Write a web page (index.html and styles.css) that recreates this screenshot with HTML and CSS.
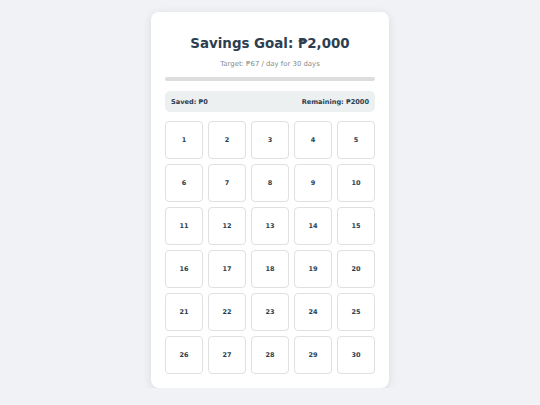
FILE: index.html
```html
<!DOCTYPE html>
<html>
<head>
<meta charset="utf-8">
<link rel="stylesheet" href="styles.css">
</head>
<body>
<div class="card">
  <h1 class="title">Savings Goal: ₱2,000</h1>
  <p class="sub">Target: ₱67 / day for 30 days</p>
  <div class="bar"><div class="fill" style="width:0%"></div></div>
  <div class="stats"><span>Saved: ₱0</span><span>Remaining: ₱2000</span></div>
  <div class="grid">
    <div class="day">1</div><div class="day">2</div><div class="day">3</div><div class="day">4</div><div class="day">5</div>
    <div class="day">6</div><div class="day">7</div><div class="day">8</div><div class="day">9</div><div class="day">10</div>
    <div class="day">11</div><div class="day">12</div><div class="day">13</div><div class="day">14</div><div class="day">15</div>
    <div class="day">16</div><div class="day">17</div><div class="day">18</div><div class="day">19</div><div class="day">20</div>
    <div class="day">21</div><div class="day">22</div><div class="day">23</div><div class="day">24</div><div class="day">25</div>
    <div class="day">26</div><div class="day">27</div><div class="day">28</div><div class="day">29</div><div class="day">30</div>
  </div>
</div>
</body>
</html>
```
FILE: styles.css
```css
html, body { margin: 0; padding: 0; }
body {
  background: #f0f2f5;
  font-family: "DejaVu Sans", sans-serif;
  color: #2c3e50;
  display: flex;
  justify-content: center;
  padding-top: 12px;
}
.card {
  width: 238px;
  box-sizing: border-box;
  background: #fff;
  border-radius: 8px;
  box-shadow: 0 2px 10px rgba(0,0,0,0.1);
  padding: 22px 14px 14px;
  text-align: center;
}
.title {
  margin: 0;
  font-size: 13.4px;
  font-weight: bold;
  line-height: 20px;
}
.sub {
  margin: 5px 0 0;
  font-size: 6.9px;
  color: #7f8c8d;
  line-height: 10px;
}
.bar {
  margin-top: 8px;
  height: 4px;
  background: #dddddd;
  border-radius: 2px;
  overflow: hidden;
}
.fill { height: 100%; background: #27ae60; }
.stats {
  margin-top: 10px;
  background: #ecf0f1;
  border-radius: 5px;
  height: 21px;
  padding: 0 6px;
  display: flex;
  justify-content: space-between;
  align-items: center;
  font-size: 6.6px;
  font-weight: bold;
}
.grid {
  margin-top: 9px;
  display: grid;
  grid-template-columns: repeat(5, 38px);
  grid-auto-rows: 38px;
  gap: 5px;
}
.day {
  box-sizing: border-box;
  border: 1px solid #e0e0e0;
  border-radius: 4px;
  display: flex;
  align-items: center;
  justify-content: center;
  font-size: 6.5px;
  font-weight: bold;
}
```
